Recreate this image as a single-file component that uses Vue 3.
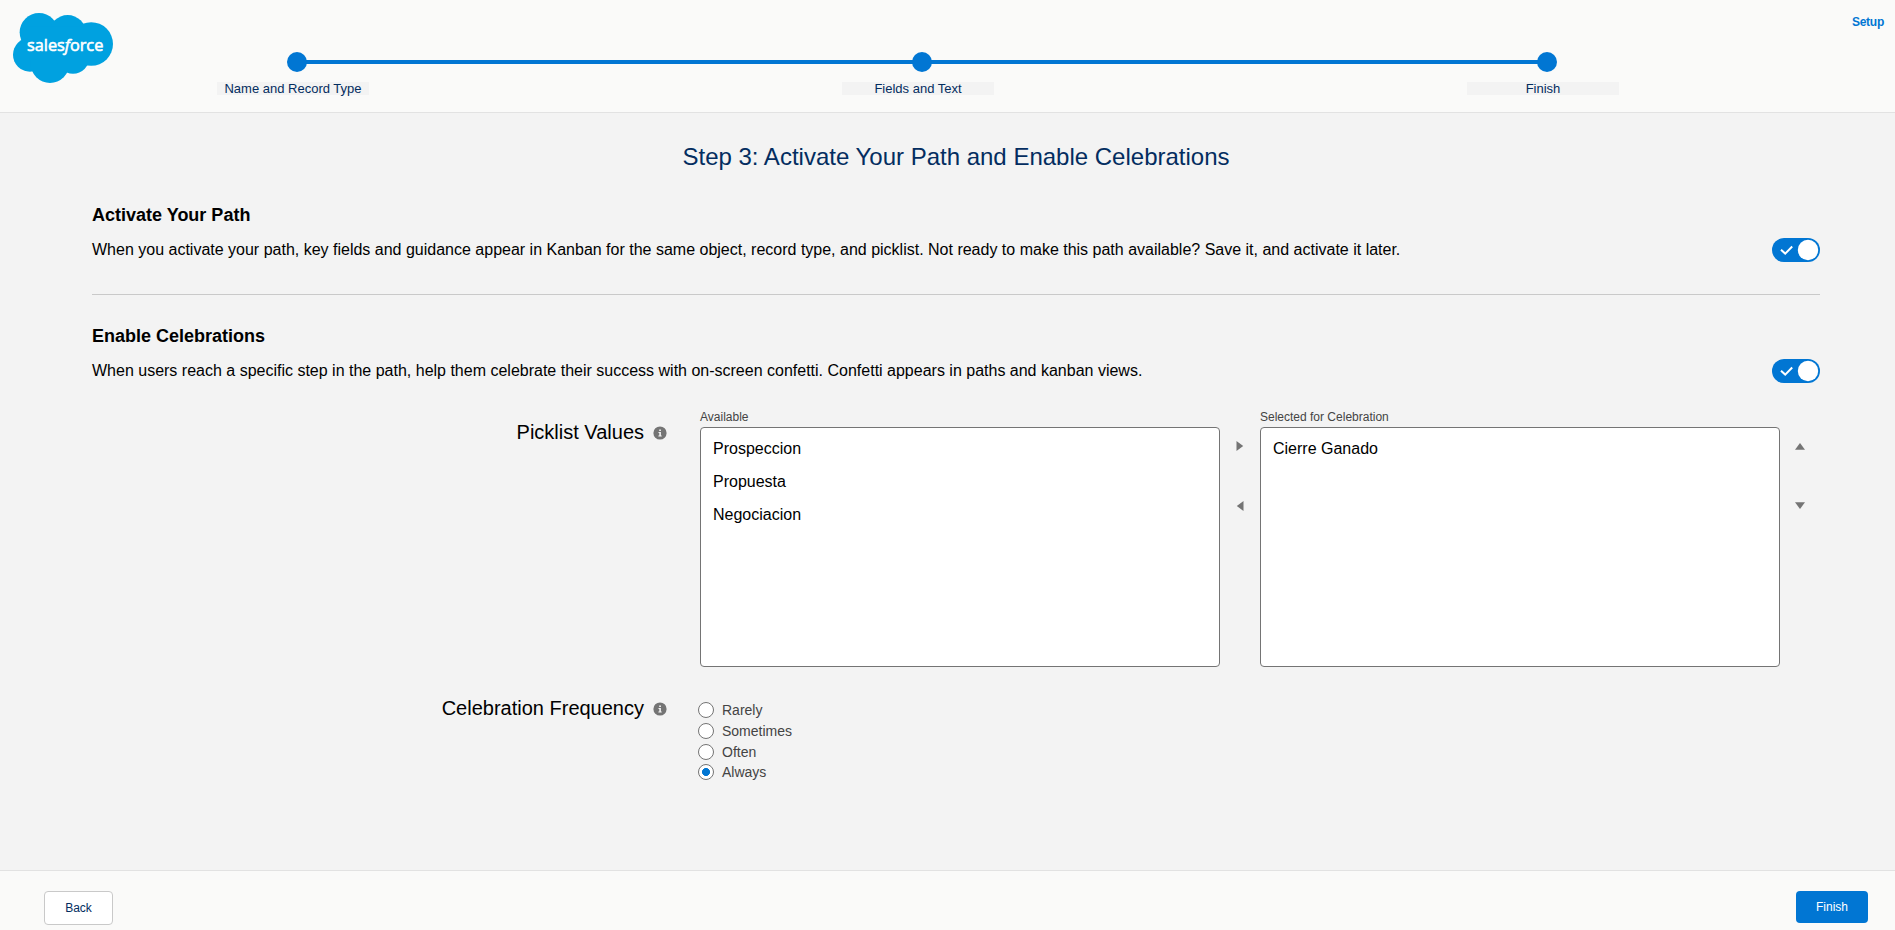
<script setup>
const steps = ['Name and Record Type', 'Fields and Text', 'Finish']
const available = ['Prospeccion', 'Propuesta', 'Negociacion']
const selected = ['Cierre Ganado']
const frequencies = ['Rarely', 'Sometimes', 'Often', 'Always']
const sections = [
  {
    title: 'Activate Your Path',
    text: 'When you activate your path, key fields and guidance appear in Kanban for the same object, record type, and picklist. Not ready to make this path available? Save it, and activate it later.',
  },
  {
    title: 'Enable Celebrations',
    text: 'When users reach a specific step in the path, help them celebrate their success with on-screen confetti. Confetti appears in paths and kanban views.',
  },
]
</script>

<template>
  <div class="page">
    <header class="header">
      <svg class="logo" width="100" height="70" viewBox="39 39 300 210">
        <g fill="#00a1e0">
          <circle cx="117" cy="97" r="58" />
          <circle cx="203" cy="100" r="55" />
          <circle cx="273.500" cy="132" r="65.500" />
          <circle cx="90" cy="164" r="51" />
          <circle cx="150" cy="191" r="58" />
          <circle cx="219" cy="172" r="49" />
          <path d="M80 80H270V180H90z" />
        </g>
        <text class="brand" x="81" y="152" textLength="229" lengthAdjust="spacingAndGlyphs">sales<tspan font-style="italic">f</tspan>orce</text>
      </svg>
      <ol class="steps">
        <li v-for="s in steps" :key="s" class="step">
          <span class="dot"></span>
          <span class="step-label">{{ s }}</span>
        </li>
      </ol>
      <a class="setup">Setup</a>
    </header>

    <main class="main">
      <h1 class="title">Step 3: Activate Your Path and Enable Celebrations</h1>

      <section v-for="s in sections" :key="s.title" class="section">
        <h2>{{ s.title }}</h2>
        <div class="row">
          <p>{{ s.text }}</p>
          <svg class="toggle" width="48" height="24" viewBox="0 0 48 24">
            <rect width="48" height="24" rx="12" fill="#0176d3" />
            <path d="M9 11.700L13.200 15.600L20.200 8.500" fill="none" stroke="#fff" stroke-width="2" />
            <circle cx="36" cy="12" r="10.200" fill="#fff" />
          </svg>
        </div>
      </section>

      <div class="field picklist">
        <div class="field-label">
          <span>Picklist Values</span>
          <svg class="info" width="14" height="14" viewBox="0 0 14 14">
            <circle cx="7" cy="7" r="6.600" fill="#747474" />
            <path d="M6.200 3.500h1.700v1.600H6.200zM5.500 6h2.400v3.400h.8v1H5.400v-1h.9V7h-.8z" fill="#f3f3f3" />
          </svg>
        </div>
        <div class="dueling">
          <div class="column">
            <span class="caption">Available</span>
            <ul class="listbox"><li v-for="v in available" :key="v">{{ v }}</li></ul>
          </div>
          <div class="arrows">
            <svg width="10" height="12" viewBox="0 0 10 12"><path d="M1.500 1L8.200 6L1.500 11z" /></svg>
            <svg width="10" height="12" viewBox="0 0 10 12"><path d="M8.500 1L1.800 6L8.500 11z" /></svg>
          </div>
          <div class="column">
            <span class="caption">Selected for Celebration</span>
            <ul class="listbox"><li v-for="v in selected" :key="v">{{ v }}</li></ul>
          </div>
          <div class="arrows">
            <svg width="10" height="12" viewBox="0 0 10 12"><path d="M0 9.700L5 3L10 9.700z" /></svg>
            <svg width="10" height="12" viewBox="0 0 10 12"><path d="M0 2.300L5 9L10 2.300z" /></svg>
          </div>
        </div>
      </div>

      <div class="field frequency">
        <div class="field-label">
          <span>Celebration Frequency</span>
          <svg class="info" width="14" height="14" viewBox="0 0 14 14">
            <circle cx="7" cy="7" r="6.600" fill="#747474" />
            <path d="M6.200 3.500h1.700v1.600H6.200zM5.500 6h2.400v3.400h.8v1H5.400v-1h.9V7h-.8z" fill="#f3f3f3" />
          </svg>
        </div>
        <div class="radios">
          <label v-for="f in frequencies" :key="f" class="radio">
            <span class="mark" :class="{ on: f === 'Always' }"></span>
            <span>{{ f }}</span>
          </label>
        </div>
      </div>
    </main>

    <footer class="footer">
      <button class="btn">Back</button>
      <button class="btn primary">Finish</button>
    </footer>
  </div>
</template>

<style>
body { margin: 0; }
</style>

<style scoped>
* { box-sizing: border-box; }
.page {
  width: 1895px;
  height: 930px;
  display: flex;
  flex-direction: column;
  overflow: hidden;
  background: #f3f3f3;
  color: #000;
  font-family: "Liberation Sans", Arial, sans-serif;
}
h1, h2, p, ul, ol { margin: 0; padding: 0; font-weight: inherit; }
ul, ol { list-style: none; }
.header {
  height: 113px;
  flex: none;
  display: flex;
  background: #fafaf9;
  border-bottom: 1px solid #e2e2e2;
}
.logo { margin: 13px 0 0 13px; flex: none; }
.brand {
  font-family: "Open Sans", "Noto Sans", sans-serif;
  font-size: 50px;
  fill: #fff;
  stroke: #fff;
  stroke-width: 1.8;
}
.steps {
  flex: none;
  display: flex;
  justify-content: space-between;
  width: 1402px;
  height: 95px;
  margin-left: 104px;
  background: linear-gradient(#0176d3, #0176d3) 80px 60px / 1250px 4px no-repeat;
}
.step { width: 152px; padding-top: 52px; }
.dot {
  display: block;
  width: 20px;
  height: 20px;
  margin-left: 70px;
  border-radius: 50%;
  background: #0176d3;
}
.step-label {
  display: block;
  height: 13px;
  margin-top: 10px;
  background: #f3f3f3;
  color: #032d60;
  font-size: 13px;
  line-height: 13px;
  text-align: center;
  white-space: nowrap;
}
.setup {
  margin: 15px 11px 0 auto;
  color: #0176d3;
  font-size: 12px;
  font-weight: bold;
  letter-spacing: -0.25px;
  line-height: 14px;
}
.main { flex: 1; min-height: 0; padding: 0 75px 0 92px; }
.title {
  padding-top: 29px;
  color: #032d60;
  font-size: 24px;
  line-height: 30px;
  text-align: center;
}
.section { height: 115px; padding-top: 30px; }
.section + .section { border-top: 1px solid #c9c9c9; }
.title + .section { height: 122px; padding-top: 32px; }
h2 { font-size: 18px; font-weight: bold; line-height: 22px; }
.row { display: flex; justify-content: space-between; align-items: center; height: 24px; margin-top: 12px; }
.row p { font-size: 16px; line-height: 24px; white-space: nowrap; }
.toggle { flex: none; }
.field { display: flex; }
.field-label {
  width: 575px;
  flex: none;
  display: flex;
  justify-content: flex-end;
  align-items: center;
  height: 26px;
  font-size: 20px;
  line-height: 26px;
}
.info { margin: 2px 0 0 9px; flex: none; }
.picklist .field-label { margin-top: 10px; }
.dueling { display: flex; margin-left: 33px; }
.column { width: 520px; }
.caption { display: block; height: 18px; color: #444; font-size: 12px; line-height: 16px; }
.listbox {
  height: 240px;
  padding-top: 4px;
  border: 1px solid #747474;
  border-radius: 4px;
  background: #fff;
}
.listbox li { height: 33px; padding-left: 12px; font-size: 16px; line-height: 33px; }
.arrows { width: 40px; display: flex; flex-direction: column; align-items: center; gap: 48px; padding-top: 31px; fill: #747474; }
.frequency { margin-top: 28px; }
.radios { margin-left: 31px; padding-top: 4.9px; }
.radio {
  display: flex;
  align-items: center;
  height: 20.67px;
  color: #444;
  font-size: 14px;
  line-height: 16px;
}
.mark {
  width: 16px;
  height: 16px;
  margin-right: 8px;
  border: 1px solid #747474;
  border-radius: 50%;
  background: #fff;
}
.mark.on { background: radial-gradient(circle, #0176d3 3.700px, #fff 4.300px); }
.footer {
  height: 60px;
  flex: none;
  display: flex;
  justify-content: space-between;
  align-items: flex-start;
  padding: 20px 27px 0 44px;
  background: #fafaf9;
  border-top: 1px solid #e2e2e2;
}
.btn {
  width: 69px;
  height: 34px;
  padding: 0;
  border: 1px solid #c9c9c9;
  border-radius: 4px;
  background: #fff;
  color: #032d60;
  font: 12px/32px "Liberation Sans", Arial, sans-serif;
}
.btn.primary { width: 72px; height: 32px; border: 0; background: #0176d3; color: #fff; }
</style>
